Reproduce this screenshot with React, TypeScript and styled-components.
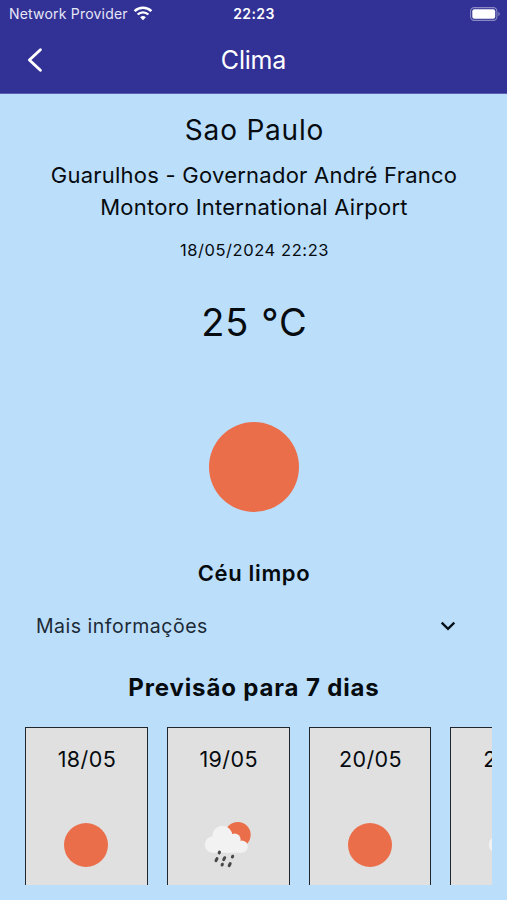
import React from 'react';
import styled, { createGlobalStyle } from 'styled-components';

interface ForecastI {
  date: string;
  icon: 'clear' | 'rain';
}

const forecast: ForecastI[] = [
  { date: '18/05', icon: 'clear' },
  { date: '19/05', icon: 'rain' },
  { date: '20/05', icon: 'clear' },
  { date: '21/05', icon: 'rain' },
];

const WifiIcon = () => (
  <svg width='20' height='15' viewBox='0 0 20 15' fill='none'>
    <path d='M1.6 5.1a12.2 12.2 0 0 1 16.8 0' stroke='#fff' strokeWidth='2.6' />
    <path d='M4.6 8.5a7.8 7.8 0 0 1 10.8 0' stroke='#fff' strokeWidth='2.4' />
    <path d='M10 14.3l-2.9-3a4.2 4.2 0 0 1 5.8 0z' fill='#fff' />
  </svg>
);

const BatteryIcon = () => (
  <svg width='31' height='14' viewBox='0 0 31 14' fill='none'>
    <rect x='0.6' y='0.6' width='26.3' height='12.8' rx='3.6' stroke='#8a8ac4' strokeWidth='1.1' />
    <rect x='2.3' y='2.2' width='22.9' height='9.6' rx='2.1' fill='#fff' />
    <path d='M28.3 5c1.9.7 1.9 3.3 0 4z' fill='#8a8ac4' />
  </svg>
);

const BackIcon = () => (
  <svg width='16' height='26' viewBox='0 0 16 26' fill='none'>
    <path
      d='M13.4 2.8L2.4 13l11 10.2'
      stroke='#fff'
      strokeWidth='2.9'
      strokeLinecap='round'
      strokeLinejoin='round'
    />
  </svg>
);

const ChevronIcon = () => (
  <svg width='16' height='10' viewBox='0 0 16 10' fill='none'>
    <path d='M1.7 1.7L8 7.8l6.3-6.1' stroke='#0a1218' strokeWidth='2.4' />
  </svg>
);

const RainIcon = () => (
  <svg width='50' height='48' viewBox='0 0 50 48'>
    <circle cx='34.8' cy='13.8' r='12.9' fill='#eb6e4b' />
    <g fill='#f2f2f2'>
      <circle cx='10' cy='23.6' r='8.2' />
      <circle cx='19.4' cy='14.8' r='10' />
      <circle cx='31.6' cy='18.4' r='6' />
      <circle cx='38.6' cy='25.6' r='6.2' />
      <path d='M10 17h22l6 6v8.8H10z' />
    </g>
    <g stroke='#484848' strokeWidth='3' strokeLinecap='round'>
      <path d='M16.5 31.1l-.3.8' />
      <path d='M14 37.6l-1 2' />
      <path d='M21.7 36.7l-1 2' />
      <path d='M29.7 35.2l-.3.8' />
      <path d='M19.4 43.2l-.3.8' />
      <path d='M27.2 42.6l-1 2' />
    </g>
  </svg>
);

const App: React.FC = () => {
  return (
    <Screen>
      <GlobalStyle />
      <Header>
        <StatusBar>
          <Carrier>
            Network Provider
            <WifiIcon />
          </Carrier>
          <Clock>22:23</Clock>
          <Battery>
            <BatteryIcon />
          </Battery>
        </StatusBar>
        <NavBar>
          <BackButton aria-label='Voltar'>
            <BackIcon />
          </BackButton>
          <NavTitle>Clima</NavTitle>
        </NavBar>
      </Header>
      <Content>
        <City>Sao Paulo</City>
        <Station>
          Guarulhos - Governador André Franco
          <br />
          Montoro International Airport
        </Station>
        <Updated>18/05/2024 22:23</Updated>
        <Temperature>25 °C</Temperature>
        <Today>
          <Sun $size={90} />
        </Today>
        <Condition>Céu limpo</Condition>
        <MoreInfo>
          Mais informações
          <ChevronIcon />
        </MoreInfo>
        <ForecastTitle>Previsão para 7 dias</ForecastTitle>
        <ForecastList>
          {forecast.map((f) => (
            <Card key={f.date}>
              <CardDate>{f.date}</CardDate>
              <CardIcon>{f.icon === 'clear' ? <Sun $size={44} /> : <RainIcon />}</CardIcon>
            </Card>
          ))}
        </ForecastList>
      </Content>
    </Screen>
  );
};

const GlobalStyle = createGlobalStyle`
  * {
    box-sizing: border-box;
  }
  body {
    margin: 0;
    background: #bbdefb;
    font-family: Inter, 'Liberation Sans', sans-serif;
  }
  svg {
    display: block;
    flex-shrink: 0;
  }
`;

const Screen = styled.div`
  display: flex;
  flex-direction: column;
  height: 900px;
  overflow: hidden;
  background: #bbdefb;
  color: #060b0f;
`;

const Header = styled.header`
  height: 94px;
  flex-shrink: 0;
  background: #323296;
  border-bottom: 1px solid #5a62b0;
  color: #fff;
`;

const StatusBar = styled.div`
  display: grid;
  grid-template-columns: 1fr auto 1fr;
  align-items: center;
  height: 27px;
  padding: 0 6px 0 9px;
`;

const Carrier = styled.span`
  display: flex;
  align-items: center;
  gap: 5px;
  font-size: 14px;
  letter-spacing: 0.2px;
  color: #e6e6f6;
`;

const Clock = styled.span`
  padding-right: 2px;
  font-size: 14px;
  font-weight: 600;
  letter-spacing: 0.4px;
`;

const Battery = styled.span`
  display: flex;
  justify-content: flex-end;
`;

const NavBar = styled.nav`
  display: grid;
  grid-template-columns: 70px 1fr 70px;
  align-items: center;
  height: 66px;
`;

const BackButton = styled.button`
  display: flex;
  padding: 0 0 0 27px;
  border: 0;
  background: none;
`;

const NavTitle = styled.h1`
  margin: 0;
  font-size: 25px;
  font-weight: 400;
  line-height: 32px;
  letter-spacing: -0.2px;
  text-align: center;
`;

const Content = styled.main`
  display: flex;
  flex-direction: column;
  align-items: center;
  padding: 16px 15px 15px;
`;

const City = styled.h2`
  margin: 0;
  padding-left: 2px;
  font-size: 28px;
  font-weight: 400;
  line-height: 40px;
  letter-spacing: 0.8px;
`;

const Station = styled.p`
  margin: 9px 0 0;
  padding-left: 1px;
  font-size: 22px;
  line-height: 32px;
  letter-spacing: 0.24px;
  text-align: center;
`;

const Updated = styled.p`
  margin: 17px 0 0;
  padding-left: 2px;
  font-size: 16.5px;
  line-height: 20px;
  letter-spacing: 0.58px;
`;

const Temperature = styled.p`
  margin: 37px 0 0;
  padding-left: 2px;
  font-size: 38px;
  line-height: 50px;
  letter-spacing: 1px;
`;

const Today = styled.div`
  display: flex;
  justify-content: center;
  height: 212px;
  padding-top: 75px;
  padding-left: 1px;
`;

const Sun = styled.div<{ $size: number }>`
  width: ${(p) => p.$size}px;
  height: ${(p) => p.$size}px;
  border-radius: 50%;
  background: #eb6e4b;
`;

const Condition = styled.p`
  margin: 0;
  padding-left: 1px;
  font-size: 22px;
  font-weight: 600;
  line-height: 29px;
  letter-spacing: 0.65px;
`;

const MoreInfo = styled.div`
  display: flex;
  justify-content: space-between;
  align-items: center;
  width: 100%;
  height: 36px;
  margin-top: 20px;
  padding: 0 36px 0 21px;
  font-size: 19.5px;
  letter-spacing: 0.5px;
  color: #1b2a36;
`;

const ForecastTitle = styled.h3`
  margin: 28px 0 0;
  padding-left: 1px;
  font-size: 24px;
  font-weight: 650;
  line-height: 32px;
  letter-spacing: 0.85px;
`;

const ForecastList = styled.div`
  display: flex;
  gap: 19px;
  width: 100%;
  height: 158px;
  margin-top: 23px;
  padding-left: 10px;
  overflow: hidden;
`;

const Card = styled.div`
  display: flex;
  flex-direction: column;
  align-items: center;
  flex: 0 0 122.8px;
  height: 240px;
  padding-top: 15px;
  border: 1.35px solid #20262c;
  background: #e0e0e0;
`;

const CardDate = styled.span`
  padding-left: 1px;
  font-size: 21.5px;
  line-height: 32px;
  letter-spacing: 0.4px;
`;

const CardIcon = styled.div`
  display: flex;
  align-items: center;
  justify-content: center;
  height: 54px;
  margin-top: 43px;
`;

export default App;
